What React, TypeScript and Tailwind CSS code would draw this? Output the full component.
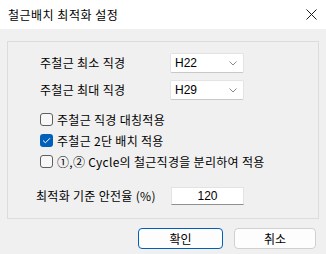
import React from "react";

const font = { fontFamily: '"Noto Sans CJK KR", "Noto Sans", sans-serif' };

function Combo({ value }: { value: string }) {
  return (
    <div className="w-[74px] h-[20px] shrink-0 bg-white border border-[#e3e3e3] border-b-[#c8c8c8] rounded-[2px] flex items-center justify-between pl-[4px] pr-[6px]">
      <span className="text-[12px] text-black leading-none" style={{ fontFamily: '"Liberation Sans", Arial, sans-serif' }}>{value}</span>
      <svg width="8" height="5" viewBox="0 0 8 5">
        <path d="M0.5 0.5 L4 4 L7.5 0.5" fill="none" stroke="#8a8a8a" strokeWidth="1" />
      </svg>
    </div>
  );
}

function Check({ checked, label }: { checked?: boolean; label: React.ReactNode }) {
  return (
    <div className="flex items-center h-[21px]">
      {checked ? (
        <div className="w-[13px] h-[13px] shrink-0 rounded-[3px] bg-[#005fb8] flex items-center justify-center">
          <svg width="9" height="7" viewBox="0 0 9 7">
            <path d="M1 3.5 L3.4 5.8 L8 1.2" fill="none" stroke="white" strokeWidth="1" />
          </svg>
        </div>
      ) : (
        <div className="w-[13px] h-[13px] shrink-0 rounded-[3px] border border-[#5e5e5e] bg-[#f7f7f7]" />
      )}
      <span className="ml-[4px] text-[12px] text-black leading-none whitespace-nowrap tracking-[0.3px]">{label}</span>
    </div>
  );
}

export default function App() {
  return (
    <div className="w-[326px] h-[254px] flex flex-col overflow-hidden" style={font}>
      <div className="h-[29px] bg-white flex items-center justify-between pl-[8px] pr-[8px]">
        <span className="text-[12px] text-black leading-none mt-[1px] tracking-[0.5px]">철근배치 최적화 설정</span>
        <svg width="11" height="11" viewBox="0 0 11 11" className="mr-[1px]">
          <path d="M0.5 0.5 L10.5 10.5 M10.5 0.5 L0.5 10.5" stroke="#1a1a1a" strokeWidth="1" />
        </svg>
      </div>
      <div className="flex-1 bg-[#f0f0f0] flex flex-col px-[7px] pt-[12px]">
        <div className="h-[178px] border border-[#dcdcdc] flex flex-col pt-[11px]">
          <div className="flex items-center h-[20px]">
            <span className="w-[162px] shrink-0 pl-[32px] text-[12px] text-black leading-none whitespace-nowrap tracking-[0.3px]">주철근 최소 직경</span>
            <Combo value="H22" />
          </div>
          <div className="flex items-center h-[20px] mt-[7px]">
            <span className="w-[162px] shrink-0 pl-[32px] text-[12px] text-black leading-none whitespace-nowrap tracking-[0.3px]">주철근 최대 직경</span>
            <Combo value="H29" />
          </div>
          <div className="flex flex-col pl-[32px] mt-[9px]">
            <Check label="주철근 직경 대칭적용" />
            <Check checked label="주철근 2단 배치 적용" />
            <Check label="①,② Cycle의 철근직경을 분리하여 적용" />
          </div>
          <div className="flex items-center mt-[15px] h-[18px]">
            <span className="w-[163px] shrink-0 pl-[28px] text-[12px] text-black leading-none whitespace-nowrap tracking-[0.3px]">최적화 기준 안전율 (%)</span>
            <div className="w-[73px] h-[18px] shrink-0 bg-white border border-[#e3e3e3] border-b-[#8f8f8f] flex items-center justify-center">
              <span className="text-[12px] text-black leading-none" style={{ fontFamily: '"Liberation Sans", Arial, sans-serif' }}>120</span>
            </div>
          </div>
        </div>
        <div className="flex justify-end gap-[11px] mt-[9px] pr-[3px]">
          <div className="w-[85px] h-[21px] rounded-[4px] border border-[#005fb8] bg-[#fdfdfd] flex items-center justify-center text-[12px] text-black leading-none">확인</div>
          <div className="w-[82px] h-[21px] rounded-[4px] border border-[#d0d0d0] bg-[#fdfdfd] flex items-center justify-center text-[12px] text-black leading-none">취소</div>
        </div>
      </div>
    </div>
  );
}
